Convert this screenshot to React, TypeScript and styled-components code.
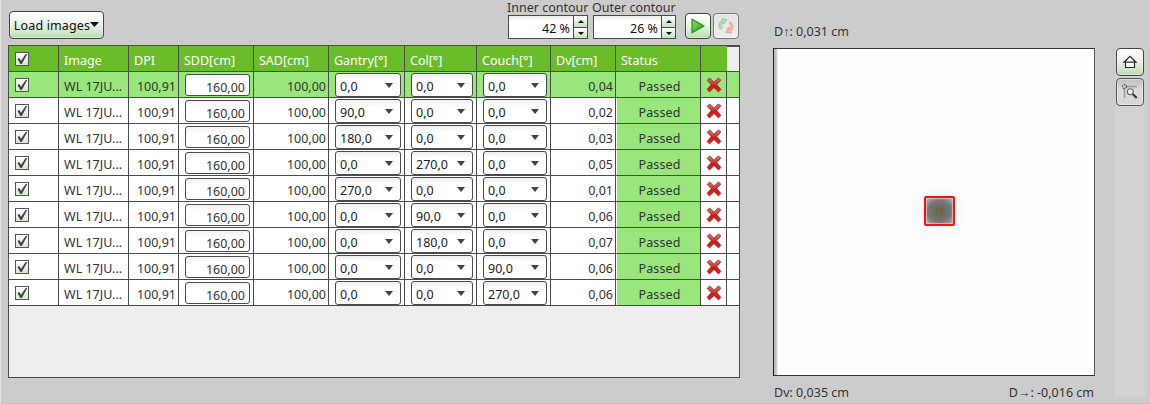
import React from 'react';
import styled, { createGlobalStyle } from 'styled-components';

const GlobalStyle = createGlobalStyle`
  * { box-sizing: border-box; }
  body { margin: 0; background: #ccc; }
  button { font: inherit; color: inherit; padding: 0; }
`;

const line = '#4b4b4b';

const Page = styled.main`
  display: flex;
  width: 1150px;
  height: 404px;
  padding-left: 7px;
  border-left: 1px solid #e4e4e4;
  border-bottom: 1px solid #c2c2c2;
  background: #ccc;
  color: #333;
  font: 12.5px/18px 'Noto Sans', 'Open Sans', sans-serif;
  letter-spacing: 0;
  white-space: nowrap;
  overflow: hidden;
`;

const Analysis = styled.section`
  width: 732px;
  flex: none;
`;

const Toolbar = styled.header`
  display: flex;
  align-items: flex-end;
  height: 45px;
  padding: 0 0 5px 1px;
`;

const Button = styled.button<{ $w: number; $h: number; $gray?: boolean }>`
  display: flex;
  align-items: center;
  justify-content: center;
  flex: none;
  width: ${p => p.$w}px;
  height: ${p => p.$h}px;
  border: 1px solid ${p => (p.$gray ? '#777' : '#444')};
  border-radius: 4px;
  background: ${p => (p.$gray
    ? 'linear-gradient(#e4e4e4, #ededed)'
    : 'linear-gradient(#fdfefd, #e8f2e6 50%, #b8ddb0)')};
  box-shadow: inset 0 0 0 1px rgba(255, 255, 255, 0.4);
`;

const LoadButton = styled(Button)`
  margin: 0 404px 1px 0;
  padding-top: 2px;
  color: #111;
  letter-spacing: 0.15px;
  & svg { margin-top: -4px; }
`;

const Field = styled.div<{ $w: number }>`
  width: ${p => p.$w}px;
  margin: 0 5px 1px 0;
`;

const FieldLabel = styled.label`
  display: block;
  height: 15px;
  line-height: 15px;
  margin-left: -1px;
`;

const Spinner = styled.div`
  display: flex;
  height: 24px;
  border: 1px solid ${line};
  background: linear-gradient(#ececec, #fff 6px);
`;

const SpinnerValue = styled.span`
  flex: 1;
  padding: 4px 3px 0 0;
  text-align: right;
  color: #111;
`;

const Steps = styled.div`
  display: grid;
  grid-template-rows: 11px 11px;
  width: 14px;
  border-left: 1px solid ${line};
`;

const Step = styled.span`
  display: grid;
  place-items: center;
  background: linear-gradient(#fff, #c4e0be);
  & + & { border-top: 1px solid ${line}; }
`;

const ToolButtons = styled.div`
  display: flex;
  gap: 2px;
  margin: 0 0 1px 4px;
`;

const Table = styled.div`
  height: 333px;
  border: 1px solid ${line};
  background: #eee;
`;

const Row = styled.div<{ $selected?: boolean }>`
  display: grid;
  grid-template-columns: 50px 70px 50px 75px 75px 76px 72px 74px 65px 85px 26px 12px;
  height: 26px;
  border-bottom: 1px solid ${line};
  background: ${p => (p.$selected ? '#98e67c' : '#fff')};
`;

const HeaderRow = styled(Row)`
  background: #69bd28;
  color: #fff;
`;

const Cell = styled.div<{ $align?: 'right' | 'center' }>`
  border-right: 1px solid ${line};
  padding: ${p => (p.$align === 'right' ? '6px 2px 0 0' : '6px 0 0 5px')};
  text-align: ${p => p.$align ?? 'left'};
  &:last-child { border-right: 0; }
`;

const HeaderCell = styled(Cell)`
  padding-top: 6px;
  &:nth-last-child(2) { border-right-color: #69bd28; }
`;

const Corner = styled.div`
  border-top: 1px solid ${line};
  background: #eee;
`;

const CheckCell = styled(Cell)`
  padding: 6px 0 0 6px;
`;

const StatusCell = styled(Cell)`
  padding-left: 3px;
  letter-spacing: 0.1px;
  background: linear-gradient(#98e67c, #98e67c) 1px 0 no-repeat;
`;

const ControlCell = styled(Cell)`
  padding: 1px 3px 0 6px;
`;

const SddInput = styled.div`
  height: 22px;
  margin-top: 1px;
  border: 1px solid ${line};
  border-radius: 3px;
  padding: 4px 4px 0 0;
  background: linear-gradient(#f1f1f1, #fff 6px);
  text-align: right;
`;

const Combo = styled.div`
  display: flex;
  justify-content: space-between;
  height: 24px;
  border: 1px solid ${line};
  border-radius: 3px;
  padding: 4px 7px 0 4px;
  background: linear-gradient(#eee, #fff 6px);
  color: #222;
  & svg { margin-top: 5px; }
`;

const DeleteCell = styled(Cell)`
  padding: 5px 0 0 5px;
`;

const Box = styled.span`
  display: block;
  width: 14px;
  height: 14px;
  border: 1px solid #555;
  background: linear-gradient(#fff, #d3e8cd);
`;

const Viewer = styled.section`
  width: 322px;
  margin-left: 33px;
  flex: none;
  padding-top: 23px;
`;

const Reading = styled.div`
  display: flex;
  justify-content: space-between;
  height: 18px;
  padding: 0 1px;
`;

const Film = styled.div`
  display: grid;
  place-items: center;
  height: 328px;
  margin: 7px 0 8px;
  border: 1px solid #333;
  border-left: 1px solid #1c1c1c;
  border-right-color: #555;
  background: linear-gradient(90deg, #bdbdbd 2px, #d9d9d9 3px, #fefefe 4px);
  & svg { display: block; }
`;

const Side = styled.aside`
  display: flex;
  flex-direction: column;
  align-items: center;
  gap: 2px;
  width: 30px;
  height: 349px;
  margin: 48px 0 0 20px;
  background: #d2d2d2;
`;

const ZoomButton = styled(Button)`
  border-color: #555;
  background: linear-gradient(#c0c0c0, #dcdcdc 45%, #d6d6d6);
`;

const Check = () => (
  <Box>
    <svg width="12" height="12" viewBox="0 0 12 12" style={{ display: 'block' }}>
      <path d="M1.4 6.1 3.3 5 5 7.7 9.7 .9l1.6.2L5.8 11H4.4Z" fill="#444" />
    </svg>
  </Box>
);

const Arrow = ({ w, h, up, color = '#444' }: { w: number; h: number; up?: boolean; color?: string }) => (
  <svg width={w} height={h} viewBox="0 0 10 5" preserveAspectRatio="none">
    <path d={up ? 'M0 5h10L5 0Z' : 'M0 0h10L5 5Z'} fill={color} />
  </svg>
);

const Cross = () => (
  <svg width="16" height="16" viewBox="0 0 16 15" preserveAspectRatio="none" style={{ display: 'block' }}>
    <defs>
      <linearGradient id="red" x1="0" y1="0" x2="0" y2="1">
        <stop offset="0" stopColor="#d9756a" />
        <stop offset=".45" stopColor="#c83a32" />
        <stop offset=".5" stopColor="#cf1a1a" />
        <stop offset="1" stopColor="#e02222" />
      </linearGradient>
    </defs>
    <path
      d="M1.2 3.1 3.7 .9 8 5 12.3 .9 14.8 2.8 10.7 7.2l4.1 4.4-2.3 2.4L8 9.8l-4.5 4.2-2.3-2.4L5.3 7.2Z"
      fill="url(#red)" stroke="#96201c" strokeWidth=".8" strokeLinejoin="round"
    />
  </svg>
);

const Play = () => (
  <svg width="16" height="18" viewBox="0 0 16 18">
    <defs>
      <linearGradient id="play" x1="0" y1="0" x2="1" y2="1">
        <stop offset="0" stopColor="#94df70" />
        <stop offset="1" stopColor="#169b0c" />
      </linearGradient>
    </defs>
    <path d="M2 2.2 14 9 2 15.8Z" fill="url(#play)" stroke="#259018" strokeWidth="1.2" strokeLinejoin="round" />
  </svg>
);

const Refresh = () => (
  <svg width="18" height="18" viewBox="0 0 18 18">
    <path d="M3.2 12.2C.9 8.6 2 4.8 5.4 3.4L5 1.6l5 1.2-3 4.4-.6-1.6C4.4 6.6 4 8.8 5.2 11.4Z" fill="#b4deb6" stroke="#8cc792" strokeWidth=".8" />
    <path d="M13.4 4.8c3.3 3 3.2 7.6.2 9.6l1 1.6-6-.4 2.6-5.2.9 1.7c1.7-1.4 1.8-3.8.2-6.3Z" fill="#f7b8b0" stroke="#e8958c" strokeWidth=".8" />
  </svg>
);

const Home = () => (
  <svg width="16" height="16" viewBox="0 0 16 16" fill="none" stroke="#2b2b2b" strokeWidth="1.2">
    <path d="M2 8.2 8 2.4l6 5.8H2ZM3.5 8.2v5.3h9V8.2" fill="#f8fcf7" />
  </svg>
);

const ZoomArea = () => (
  <svg width="20" height="20" viewBox="0 0 20 20" fill="none">
    <path d="M6 4.5h11M4.5 6v10" stroke="#999" strokeWidth="1.5" />
    <circle cx="4.5" cy="4.5" r="2" stroke="#555" strokeWidth="1.3" strokeDasharray="1.6 1" />
    <path d="m12.7 12 4 4" stroke="#333" strokeWidth="2.2" />
    <circle cx="10.3" cy="9.8" r="3" fill="#eee" stroke="#666" strokeWidth="1.1" />
  </svg>
);

const Beam = () => (
  <svg width="320" height="326" viewBox="0 0 320 326">
    <defs>
      <radialGradient id="halo">
        <stop offset="0" stopColor="#bbb" stopOpacity=".5" />
        <stop offset=".5" stopColor="#ddd" stopOpacity=".25" />
        <stop offset="1" stopColor="#fff" stopOpacity="0" />
      </radialGradient>
      <radialGradient id="field" r=".72">
        <stop offset="0" stopColor="#626262" />
        <stop offset=".55" stopColor="#777" />
        <stop offset="1" stopColor="#c8c8c8" />
      </radialGradient>
    </defs>
    <path d="M143 25h40l14 90 30 48-30 50-14 62h-40l-14-62-30-50 30-48Z" fill="#fdfdfd" />
    <circle cx="165" cy="163" r="32" fill="url(#halo)" />
    <rect x="151" y="149" width="29" height="27" fill="url(#field)" />
    <rect x="152.5" y="149.5" width="26" height="25" fill="none" stroke="#e9c4c4" strokeOpacity=".7" strokeWidth="1" />
    <rect x="151" y="148" width="29" height="28" rx="1" stroke="#e6161c" strokeWidth="2" fill="none" />
    <path d="m162 159 7 7m0-7-7 7" stroke="#2d8a20" strokeWidth="1.6" />
    <path d="M165.5 160v5m-2.5-2.5h5" stroke="#d0401b" strokeWidth="1.8" />
  </svg>
);

const images = [
  ['0,0', '0,0', '0,0', '0,04'],
  ['90,0', '0,0', '0,0', '0,02'],
  ['180,0', '0,0', '0,0', '0,03'],
  ['0,0', '270,0', '0,0', '0,05'],
  ['270,0', '0,0', '0,0', '0,01'],
  ['0,0', '90,0', '0,0', '0,06'],
  ['0,0', '180,0', '0,0', '0,07'],
  ['0,0', '0,0', '90,0', '0,06'],
  ['0,0', '0,0', '270,0', '0,06'],
];

const headings = ['Image', 'DPI', 'SDD[cm]', 'SAD[cm]', 'Gantry[°]', 'Col[°]', 'Couch[°]', 'Dv[cm]', 'Status', ''];

const ContourField = ({ label, value, width }: { label: string; value: string; width: number }) => (
  <Field $w={width}>
    <FieldLabel>{label}</FieldLabel>
    <Spinner>
      <SpinnerValue>{value}</SpinnerValue>
      <Steps>
        <Step><Arrow w={6} h={3} up color="#111" /></Step>
        <Step><Arrow w={6} h={3} color="#111" /></Step>
      </Steps>
    </Spinner>
  </Field>
);

export default function App() {
  return (
    <>
      <GlobalStyle />
      <Page>
        <Analysis>
          <Toolbar>
            <LoadButton $w={95} $h={28}>Load images<Arrow w={9} h={5} color="#111" /></LoadButton>
            <ContourField label="Inner contour" value="42 %" width={80} />
            <ContourField label="Outer contour" value="26 %" width={83} />
            <ToolButtons>
              <Button $w={26} $h={26}><Play /></Button>
              <Button $w={26} $h={26} $gray><Refresh /></Button>
            </ToolButtons>
          </Toolbar>
          <Table>
            <HeaderRow>
              <CheckCell><Check /></CheckCell>
              {headings.map((h, i) => <HeaderCell key={i}>{h}</HeaderCell>)}
              <Corner />
            </HeaderRow>
            {images.map(([gantry, col, couch, dv], i) => (
              <Row key={i} $selected={i === 0}>
                <CheckCell><Check /></CheckCell>
                <Cell>WL 17JU...</Cell>
                <Cell $align="right">100,91</Cell>
                <ControlCell><SddInput>160,00</SddInput></ControlCell>
                <Cell $align="right">100,00</Cell>
                {[gantry, col, couch].map((angle, k) => (
                  <ControlCell key={k}><Combo>{angle}<Arrow w={8} h={5} /></Combo></ControlCell>
                ))}
                <Cell $align="right">{dv}</Cell>
                <StatusCell $align="center">Passed</StatusCell>
                <DeleteCell><Cross /></DeleteCell>
                <Cell />
              </Row>
            ))}
          </Table>
        </Analysis>
        <Viewer>
          <Reading><span>D↑: 0,031 cm</span></Reading>
          <Film><Beam /></Film>
          <Reading><span>Dv: 0,035 cm</span><span>D→: -0,016 cm</span></Reading>
        </Viewer>
        <Side>
          <Button $w={28} $h={28}><Home /></Button>
          <ZoomButton $w={28} $h={28}><ZoomArea /></ZoomButton>
        </Side>
      </Page>
    </>
  );
}
